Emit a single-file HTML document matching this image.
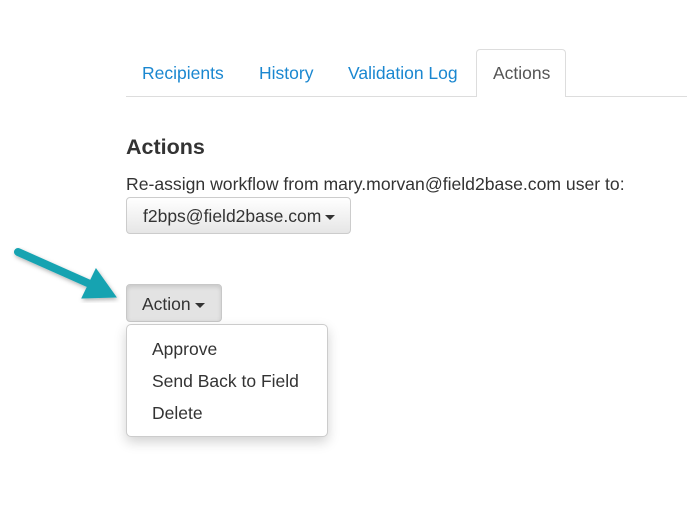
<!DOCTYPE html>
<html><head><style>
body{margin:0;width:687px;height:525px;background:#fff;font-family:"Liberation Sans",Arial,sans-serif;color:#333;position:relative;overflow:hidden}
.a{position:absolute}
.tab{position:absolute;top:63px;font-size:17.5px;color:#1a87d0}
.btn{position:absolute;border:1px solid #ccc;border-radius:4px;background:linear-gradient(#fff,#e6e6e6);font-size:17.5px;color:#333;box-sizing:border-box}
.caret{display:inline-block;width:0;height:0;border-left:5px solid transparent;border-right:5px solid transparent;border-top:5px solid #333;vertical-align:middle;margin-left:4px}
.it{position:absolute;left:25px;font-size:17.5px;color:#333}
</style></head><body>
<div class="a" style="left:126px;top:96px;width:561px;height:1px;background:#ddd"></div>
<div class="tab" style="left:142px">Recipients</div>
<div class="tab" style="left:259px">History</div>
<div class="tab" style="left:348px">Validation Log</div>
<div class="a" style="left:476px;top:49px;width:90px;height:48px;box-sizing:border-box;border:1px solid #ddd;border-bottom:none;border-radius:4px 4px 0 0;background:#fff"></div>
<div class="tab" style="left:493px;color:#555">Actions</div>
<div class="a" style="left:126px;top:135px;font-size:21.5px;font-weight:bold">Actions</div>
<div class="a" style="left:126px;top:174px;font-size:17.6px">Re-assign workflow from mary.morvan@field2base.com user to:</div>
<div class="btn" style="left:126px;top:197px;width:225px;height:37px;padding:8px 0 0 16px">f2bps@field2base.com<span class="caret"></span></div>
<div class="btn" style="left:126px;top:284px;width:96px;height:38px;padding:9px 0 0 15px;background:#e3e3e3;border-color:#c8c8c8;box-shadow:inset 0 2px 4px rgba(0,0,0,.12)">Action<span class="caret"></span></div>
<div class="a" style="left:126px;top:324px;width:202px;height:113px;box-sizing:border-box;border:1px solid #ccc;border-radius:5px;background:#fff;box-shadow:0 5px 12px rgba(0,0,0,.18)">
<div class="it" style="top:14px">Approve</div>
<div class="it" style="top:46px">Send Back to Field</div>
<div class="it" style="top:78px">Delete</div>
</div>
<svg class="a" style="left:0;top:235px" width="130" height="80">
<defs><filter id="s"><feDropShadow dx="1" dy="2" stdDeviation="2" flood-opacity=".3"/></filter></defs>
<g filter="url(#s)" fill="#17a3b1" stroke="#17a3b1">
<line x1="18" y1="17" x2="90" y2="49" stroke-width="8" stroke-linecap="round"/>
<polygon points="82,63 116,62 96,34" stroke-width="1"/>
</g></svg>
</body></html>
